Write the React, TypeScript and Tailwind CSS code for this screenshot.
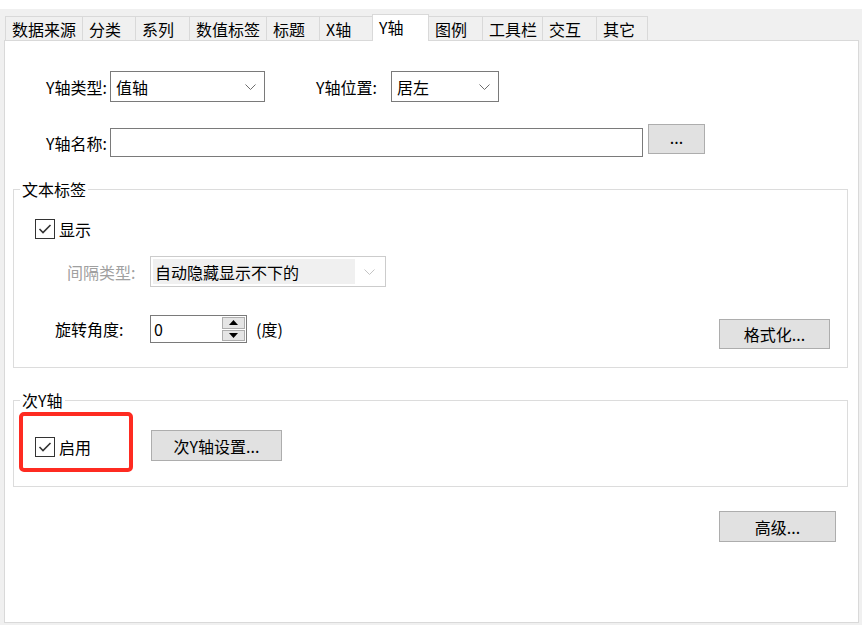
import type { ReactNode } from 'react'

const tabs = [
  { label: '数据来源', w: 'w-[77px]' },
  { label: '分类', w: 'w-[53px]' },
  { label: '系列', w: 'w-[54px]' },
  { label: '数值标签', w: 'w-[77px]' },
  { label: '标题', w: 'w-[53px]' },
  { label: 'X轴', w: 'w-[53px]' },
  { label: 'Y轴', w: 'w-[57px]', active: true },
  { label: '图例', w: 'w-[53px]' },
  { label: '工具栏', w: 'w-[60px]' },
  { label: '交互', w: 'w-[54px]' },
  { label: '其它', w: 'w-[52px]' },
]

function Chevron({ disabled }: { disabled?: boolean }) {
  return (
    <svg
      width="11"
      height="6"
      viewBox="0 0 11 6"
      className={disabled ? 'text-[#c4c4c4]' : 'text-[#6d6d6d]'}
    >
      <path d="M0.5 0.5 L5.5 5.5 L10.5 0.5" fill="none" stroke="currentColor" strokeWidth="1" />
    </svg>
  )
}

function Select({ value, width, disabled }: { value: string; width: string; disabled?: boolean }) {
  return (
    <div
      className={`${width} h-[31px] flex items-stretch bg-white border ${
        disabled ? 'border-[#cccccc] p-[2px]' : 'border-[#7a7a7a]'
      }`}
    >
      <div
        className={`flex-1 flex items-center ${
          disabled ? 'bg-[#f0f0f0] pl-[2px]' : 'pl-[5px]'
        }`}
      >
        {value}
      </div>
      <div className="w-[28px] flex items-center justify-center">
        <Chevron disabled={disabled} />
      </div>
    </div>
  )
}

function Checkbox({ label }: { label: string }) {
  return (
    <div className="flex items-center h-[20px]">
      <div className="w-[20px] h-[20px] border border-[#333333] bg-white flex items-center justify-center">
        <svg width="18" height="18" viewBox="0 0 18 18">
          <path d="M3.5 9 L7 12.5 L14.5 5" fill="none" stroke="#333333" strokeWidth="1.6" />
        </svg>
      </div>
      <span className="ml-[4px] leading-[20px]">{label}</span>
    </div>
  )
}

function Button({ children, className }: { children: ReactNode; className: string }) {
  return (
    <div
      className={`${className} flex items-center justify-center bg-[#e1e1e1] border border-[#adadad]`}
    >
      {children}
    </div>
  )
}

// group box: the caption sits on the top border
function Group({ title, className, children }: { title: string; className: string; children: ReactNode }) {
  return (
    <div className={`${className} ml-[8px] mr-[10px] border border-[#dcdcdc]`}>
      <div className="w-fit -mt-[11px] ml-[6px] px-[2px] h-[20px] leading-[20px] bg-white">{title}</div>
      {children}
    </div>
  )
}

export default function App() {
  return (
    <div
      className="w-[865px] h-[625px] bg-white pt-[9px] text-[16px] text-black overflow-hidden"
      style={{ fontFamily: '"Noto Sans CJK SC", "Noto Sans", sans-serif' }}
    >
      <div className="w-[862px] h-[616px] bg-[#f0f0f0] pl-[4px] pr-[3px] pb-[2px] flex flex-col">
        {/* Tab strip */}
        <div className="h-[31px] flex items-end pl-[1px]">
          {tabs.map((t, i) => {
            const prevActive = i > 0 && tabs[i - 1].active
            if (t.active) {
              return (
                <div
                  key={t.label}
                  className={`${t.w} h-[27px] -mb-[1px] relative z-10 bg-white border-l border-t border-r border-[#d9d9d9] flex items-center pl-[6px] pb-[3px] leading-none`}
                >
                  {t.label}
                </div>
              )
            }
            return (
              <div
                key={t.label}
                className={`${t.w} h-[24px] bg-[#f0f0f0] border-t border-[#d9d9d9] flex items-center pl-[6px] leading-none ${
                  prevActive ? '' : 'border-l'
                } ${i === tabs.length - 1 ? 'border-r' : ''}`}
              >
                {t.label}
              </div>
            )
          })}
        </div>

        {/* Panel */}
        <div className="flex-1 bg-white border border-[#d9d9d9] flex flex-col">
          {/* Y axis type / position */}
          <div className="mt-[30px] h-[31px] flex items-center pl-[28px]">
            <div className="w-[74px] text-right">Y轴类型:</div>
            <div className="ml-[3px]">
              <Select value="值轴" width="w-[155px]" />
            </div>
            <div className="w-[112px] text-right">Y轴位置:</div>
            <div className="ml-[14px]">
              <Select value="居左" width="w-[108px]" />
            </div>
          </div>

          {/* Y axis name */}
          <div className="mt-[22px] flex items-start pl-[28px]">
            <div className="w-[74px] h-[29px] mt-[4px] flex items-center justify-end">Y轴名称:</div>
            <div className="ml-[3px] mt-[4px] w-[533px] h-[29px] border border-[#7a7a7a] bg-white" />
            <Button className="ml-[5px] w-[57px] h-[30px] pb-[4px]">...</Button>
          </div>

          {/* 文本标签 */}
          <Group title="文本标签" className="mt-[32px] pb-[18px]">
            <div className="mt-[20px] pl-[21px]">
              <Checkbox label="显示" />
            </div>
            <div className="mt-[17px] flex items-center pl-[53px]">
              <div className="w-[83px] text-[#a0a0a0]">间隔类型:</div>
              <Select value="自动隐藏显示不下的" width="w-[236px]" disabled />
            </div>
            <div className="mt-[28px] flex items-start pl-[41px] pr-[17px]">
              <div className="w-[95px] h-[28px] flex items-center">旋转角度:</div>
              <div className="w-[97px] h-[28px] border border-[#7a7a7a] bg-white flex">
                <div className="flex-1 pl-[3px] flex items-center">0</div>
                <div className="w-[25px] flex flex-col gap-[1px] p-[1px]">
                  <div className="flex-1 bg-[#e5e5e5] border border-[#adadad] flex items-center justify-center">
                    <svg width="9" height="5" viewBox="0 0 9 5">
                      <path d="M0 5 L4.5 0 L9 5 Z" fill="#000" />
                    </svg>
                  </div>
                  <div className="flex-1 bg-[#e5e5e5] border border-[#adadad] flex items-center justify-center">
                    <svg width="9" height="5" viewBox="0 0 9 5">
                      <path d="M0 0 L4.5 5 L9 0 Z" fill="#000" />
                    </svg>
                  </div>
                </div>
              </div>
              <div className="ml-[9px] h-[28px] flex items-center">(度)</div>
              <Button className="ml-auto mt-[4px] w-[111px] h-[30px]">格式化...</Button>
            </div>
          </Group>

          {/* 次Y轴 */}
          <Group title="次Y轴" className="mt-[32px] pb-[14px]">
            <div className="mt-[2px] flex items-start">
              <div className="ml-[5px] w-[114px] h-[60px] border-[4px] border-[#fe2b21] rounded-[5px] pt-[10px] pl-[12px] flex items-center">
                <Checkbox label="启用" />
              </div>
              <Button className="ml-[18px] mt-[18px] w-[131px] h-[31px]">次Y轴设置...</Button>
            </div>
          </Group>

          <div className="mt-[24px] flex justify-end pr-[22px]">
            <Button className="w-[117px] h-[31px]">高级...</Button>
          </div>
        </div>
      </div>
    </div>
  )
}
